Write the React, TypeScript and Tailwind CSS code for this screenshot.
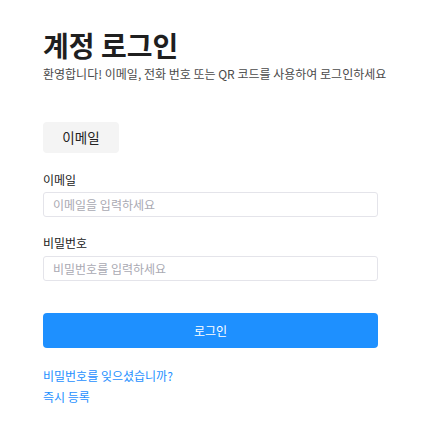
export default function App() {
  return (
    <div className="min-h-screen bg-white font-['Noto_Sans_CJK_KR','Noto_Sans',sans-serif]">
      <div className="w-[335px] ml-[43px] pt-[25px]">
        <h1 className="text-[28px] font-bold leading-[40px] text-[#1f1f1f]">계정 로그인</h1>
        <p className="whitespace-nowrap text-[12px] leading-[17px] text-[#4a4a4a]">
          환영합니다! 이메일, 전화 번호 또는 QR 코드를 사용하여 로그인하세요
        </p>

        <div className="mt-[40px]">
          <button className="w-[76px] h-[31px] rounded-[4px] bg-[#f4f4f4] text-[13.5px] text-[#222]">이메일</button>
        </div>

        <div className="mt-[18px]">
          <label className="block text-[12px] leading-[18px] text-[#222]">이메일</label>
          <input
            className="mt-[3px] w-full h-[25px] rounded-[3px] border border-[#e4e4ea] px-[9px] text-[12px] outline-none placeholder:text-[#a9a9b2]"
            placeholder="이메일을 입력하세요"
          />
        </div>

        <div className="mt-[17px]">
          <label className="block text-[12px] leading-[18px] text-[#222]">비밀번호</label>
          <input
            type="password"
            className="mt-[4px] w-full h-[25px] rounded-[3px] border border-[#e4e4ea] px-[9px] text-[12px] outline-none placeholder:text-[#a9a9b2]"
            placeholder="비밀번호를 입력하세요"
          />
        </div>

        <button className="mt-[32px] w-full h-[35px] rounded-[4px] bg-[#1e90ff] text-[12px] text-white">로그인</button>

        <div className="mt-[19px] flex flex-col gap-[3px] text-[12px] leading-[18px] text-[#1e90ff]">
          <a href="#">비밀번호를 잊으셨습니까?</a>
          <a href="#">즉시 등록</a>
        </div>
      </div>
    </div>
  )
}
